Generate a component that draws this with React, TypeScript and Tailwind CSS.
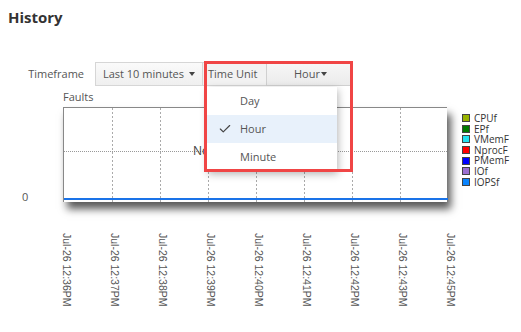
import { Check } from "lucide-react";

const times = ["12:36", "12:37", "12:38", "12:39", "12:40", "12:41", "12:42", "12:43", "12:45"];

const legend = [
  { name: "CPUf", color: "bg-[#99b400]" },
  { name: "EPf", color: "bg-[#007a00]" },
  { name: "VMemF", color: "bg-[#22e0f0]" },
  { name: "NprocF", color: "bg-[#ff0000]" },
  { name: "PMemF", color: "bg-[#0000ff]" },
  { name: "IOf", color: "bg-[#9b6fd0]" },
  { name: "IOPSf", color: "bg-[#0a84ff]" },
];

function Caret({ tight }: { tight?: boolean }) {
  return (
    <span
      className={`inline-block border-x-[3.5px] border-x-transparent border-t-[4px] border-t-[#444] ${tight ? "ml-[1px]" : "ml-[5px]"}`}
    />
  );
}

function PlotGrid() {
  const xs = [48, 96, 144, 192, 240, 288, 336];
  return (
    <svg width="384" height="95" className="absolute left-0 top-0">
      {xs.map((x) => (
        <line key={x} x1={x + 0.5} y1={0} x2={x + 0.5} y2={95} stroke="#aaa" strokeDasharray="2 2" />
      ))}
      <line x1={0} y1={43.5} x2={384} y2={43.5} stroke="#999" strokeDasharray="1 1" />
      <line x1={0} y1={91} x2={384} y2={91} stroke="#1a73e8" strokeWidth="2" />
    </svg>
  );
}

export default function App() {
  return (
    <div className="relative w-[521px] h-[332px] overflow-hidden bg-white text-[#555] font-['Open_Sans',sans-serif]">
      <h1 className="pl-[8px] pt-[7px] text-[15px] leading-[20px] font-bold text-[#333]">History</h1>

      <div className="mt-[35px] flex h-[24px] items-center text-[11px]">
        <span className="w-[95px] pr-[11px] text-right">Timeframe</span>
        <button className="flex h-[24px] w-[108px] items-center justify-center border border-[#d6d6d6] bg-gradient-to-b from-[#fafafa] to-[#efefef]">
          Last 10 minutes
          <Caret />
        </button>
        <span className="flex h-[24px] w-[63px] items-center border-y border-[#d6d6d6] bg-[#f2f2f2] pl-[5px]">Time Unit</span>
        <button className="flex h-[24px] w-[86px] items-center justify-center border border-[#d0d0d0] bg-gradient-to-b from-[#f7f7f7] to-[#ebebeb] pl-[3px]">
          Hour
          <Caret tight />
        </button>
      </div>

      <div className="mt-[2px] pl-[63px] text-[11px] leading-[18px]">Faults</div>

      <div className="mt-[1px] flex">
        <div className="relative w-[63px]">
          <span className="absolute left-[22px] top-[82px] text-[11px] leading-[16px]">0</span>
        </div>
        <div className="relative h-[95px] w-[384px] border-l border-t border-[#888] bg-white shadow-[4px_7px_8px_rgba(0,0,0,0.65)]">
          <PlotGrid />
          <span className="absolute left-[129px] top-[35px] text-[12px] leading-[16px] text-[#444]">No data to display</span>
        </div>
        <div className="ml-[15px] mt-[6px] flex flex-col text-[10px] text-[#333]">
          {legend.map((l) => (
            <div key={l.name} className="flex h-[10.6px] items-center gap-[4px] overflow-visible">
              <span className={`h-[8px] w-[8px] border border-[#444] ${l.color}`} />
              <span className="leading-[10.6px]">{l.name}</span>
            </div>
          ))}
        </div>
      </div>

      <div className="mt-[31px] flex pl-[60px]">
        {times.map((t) => (
          <div key={t} className="w-[48px]">
            <span className="block text-[10.5px] leading-[14px] text-[#555] font-['Liberation_Sans',sans-serif] [writing-mode:vertical-rl]">
              Jul-26 {t}PM
            </span>
          </div>
        ))}
      </div>

      <div className="absolute left-[207px] top-[87px] w-[130px] bg-white text-[11px] shadow-[1px_3px_8px_rgba(0,0,0,0.3)]">
        <div className="flex h-[28px] items-center pl-[33px]">Day</div>
        <div className="relative flex h-[28px] items-center bg-[#e8f1fb] pl-[33px]">
          <Check className="absolute left-[11px] top-[7px] h-[14px] w-[14px] text-[#444]" strokeWidth={2} />
          Hour
        </div>
        <div className="flex h-[28px] items-center pl-[33px]">Minute</div>
      </div>

      <div className="absolute left-[204px] top-[61px] h-[111px] w-[149px] border-[3px] border-[#f04545]" />
    </div>
  );
}
